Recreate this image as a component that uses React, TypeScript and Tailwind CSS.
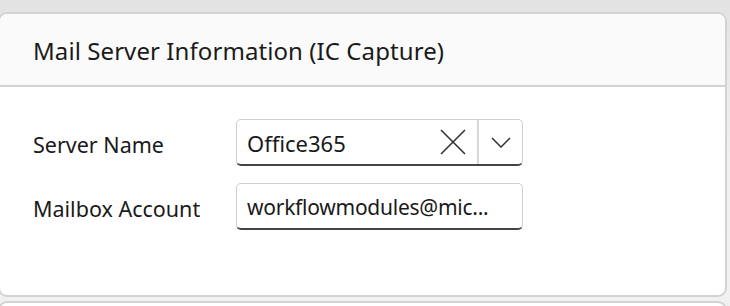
const font = { fontFamily: '"Noto Sans", "Open Sans", sans-serif' };

function Field({ label, children }: { label: string; children: React.ReactNode }) {
    return (
        <div className="flex items-center">
            <span className="w-[203px] shrink-0 pt-[5px] text-[21.5px] text-[#1a1a1a]">{label}</span>
            {children}
        </div>
    );
}

export default function App() {
    return (
        <div className="h-[306px] w-[730px] overflow-hidden bg-gradient-to-b from-[#e3e3e3] via-[#f0f0f0] to-[#f1f1f1] pt-[12px]" style={font}>
            <div className="ml-[-2px] mr-[3px] h-[285px] overflow-hidden rounded-[9px] border-2 border-[#d3d3d3] bg-white">
                <div className="flex h-[73px] items-center border-b-2 border-[#d3d3d3] bg-[#fafafa] pl-[33px] pt-[3px]">
                    <h2 className="text-[24px] tracking-[0.08px] text-[#1a1a1a]">Mail Server Information (IC Capture)</h2>
                </div>
                <div className="flex flex-col gap-[17px] pl-[33px] pt-[32px]">
                    <Field label="Server Name">
                        <div className="flex h-[47px] w-[287px] items-center rounded-[5px] border border-b-2 border-[#d0d0d0] border-b-[#444444] bg-white">
                            <span className="flex-1 pl-[10px] pt-[3px] text-[22px] text-[#1a1a1a]">Office365</span>
                            <svg width="26" height="26" viewBox="0 0 26 26" className="mr-[11px] text-[#333]">
                                <path d="M1 1 L25 25 M25 1 L1 25" stroke="currentColor" strokeWidth="1.6" fill="none" />
                            </svg>
                            <div className="flex h-full items-center border-l-2 border-[#d6d6d6] pl-[12px] pr-[11px]">
                                <svg width="20" height="11" viewBox="0 0 20 11" className="text-[#333]">
                                    <path d="M1 1 L10 10 L19 1" stroke="currentColor" strokeWidth="1.5" fill="none" />
                                </svg>
                            </div>
                        </div>
                    </Field>
                    <Field label="Mailbox Account">
                        <div className="flex h-[47px] w-[287px] items-center rounded-[5px] border border-b-2 border-[#d0d0d0] border-b-[#444444] bg-white px-[10px]">
                            <span className="whitespace-nowrap pt-[3px] text-[21px] tracking-[-0.25px] text-[#1a1a1a]">workflowmodules@mic...</span>
                        </div>
                    </Field>
                </div>
            </div>
            <div className="ml-[-2px] mr-[3px] mt-[4px] h-[20px] rounded-t-[9px] border-2 border-[#d3d3d3] bg-white" />
        </div>
    );
}
